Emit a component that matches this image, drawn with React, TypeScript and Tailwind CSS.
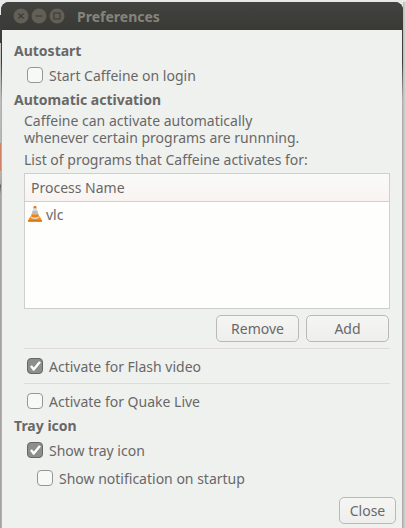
import React, { ReactNode, useState } from 'react';
import clsx from 'clsx';

type CheckOptionProps = {
  label: string;
  defaultChecked?: boolean;
  className?: string;
}

function CheckOption({ label, defaultChecked = false, className }: CheckOptionProps): ReactNode {
  const [checked, setChecked] = useState(defaultChecked);

  return (
    <label className={clsx('flex h-[22px] items-center gap-1.5', className)}>
      <span className="grid size-4 shrink-0">
        <input
          type="checkbox"
          checked={checked}
          onChange={(event) => setChecked(event.target.checked)}
          className="col-start-1 row-start-1 size-4 appearance-none rounded border border-[#969694] bg-[#f8f9f7] checked:border-[#666664] checked:bg-[#8e8e8d]"
        />
        {checked && (
          <svg viewBox="0 0 16 16" className="pointer-events-none col-start-1 row-start-1 size-4" aria-hidden="true">
            <path d="M3 8.4 4.9 7.2 6.8 9.4 12 3.3 14 4.6 7.2 12.8H6.1z" fill="#fff" />
          </svg>
        )}
      </span>
      <span>{label}</span>
    </label>
  );
}

type ButtonProps = {
  children: ReactNode;
  className?: string;
}

function Button({ children, className }: ButtonProps): ReactNode {
  return (
    <button
      type="button"
      className={clsx(
        'h-[27px] rounded-[5px] border border-[#b9b9b7] bg-linear-to-b from-[#f5f6f4] to-[#eeefed] text-center',
        className,
      )}
    >
      {children}
    </button>
  );
}

type WindowButtonProps = {
  label: string;
  path: string;
}

function WindowButton({ label, path }: WindowButtonProps): ReactNode {
  return (
    <button type="button" aria-label={label} className="size-4">
      <svg viewBox="0 0 16 16" className="size-4">
        <circle cx="8" cy="8" r="7.5" fill="#625f56" />
        <path d={path} fill="none" stroke="#3a3934" strokeWidth="1.1" />
      </svg>
    </button>
  );
}

function VlcIcon(): ReactNode {
  return (
    <svg viewBox="0 0 16 18" className="h-[18px] w-4 shrink-0" aria-hidden="true">
      <path d="M3.2 11.5h9.6l2.2 4.2H1z" fill="#f58b0a" />
      <path d="M1 15.2h14v1.6H1z" fill="#d06a00" />
      <path d="M7 1h2l3.4 11.8q-4.4 2.6-8.8 0z" fill="#dcdee0" />
      <path d="M7 1h2l.7 2.2H6.3z" fill="#e5791b" />
      <path d="M5.7 5.8h4.6l.9 3q-3.2 1.2-6.4 0z" fill="#b9bcc0" />
      <path d="M4.7 8.9q3.3 1.3 6.6 0l.7 2.6q-4 1.9-8 0z" fill="#ee8214" />
    </svg>
  );
}

function App(): ReactNode {
  return (
    <div className="flex min-h-screen bg-[#e6e9e7] pt-0.5 font-['Noto_Sans','Liberation_Sans',sans-serif] text-[14px] leading-[17px] text-[#696867]">
      {/* sliver of the desktop behind the window */}
      <div className="w-px shrink-0 bg-[linear-gradient(#e6e9e7_13px,#3c3c3a_13px,#3c3c3a_41px,#c4c4c4_41px,#b9b7b7_141px,#d08467_141px,#d08467_169px,#b9b7b7_169px,#aba6a6_182px,#5a5a5a_183px,#a8a3a3_192px)]" />

      <main className="flex grow flex-col overflow-hidden rounded-t-lg bg-[linear-gradient(#3c3d39_60px,#b3adab_98px)]">
        <header className="flex h-7 shrink-0 items-center gap-0.5 bg-linear-to-b from-[#42433f] to-[#393935] pl-3 text-[#85847c]">
          <WindowButton label="Close window" path="m5.5 5.5 5 5m0-5-5 5" />
          <WindowButton label="Minimize" path="M4.5 8h7" />
          <WindowButton label="Maximize" path="M5 5h6v6H5z" />
          <h1 className="pl-2.5 font-bold">Preferences</h1>
        </header>

        <div className="mx-px flex grow flex-col bg-[#eff1ef]">
          <div className="flex grow flex-col px-3 pt-3">
            <h2 className="font-bold">Autostart</h2>
            <CheckOption label="Start Caffeine on login" className="mt-[5px] ml-[13px]" />

            <h2 className="mt-[5px] font-bold">Automatic activation</h2>
            <div className="ml-2.5 flex flex-col">
              <p className="mt-1">
                Caffeine can activate automatically
                <br />
                whenever certain programs are runnning.
              </p>
              <p className="mt-[5px]">List of programs that Caffeine activates for:</p>

              <div className="mt-[5px] h-[136px] border border-[#cfd0ce] bg-[#fefefd]">
                <table className="w-full border-separate border-spacing-0">
                  <thead>
                    <tr>
                      <th className="h-7 border-b border-[#cfd0ce] bg-linear-to-b from-[#f9fbf9] to-[#f9f3f1] px-1.5 text-left font-normal">
                        Process Name
                      </th>
                    </tr>
                  </thead>
                  <tbody>
                    <tr>
                      <td className="h-6 px-0.5">
                        <span className="flex items-center gap-[3px]">
                          <VlcIcon />
                          vlc
                        </span>
                      </td>
                    </tr>
                  </tbody>
                </table>
              </div>

              <div className="mt-1.5 flex justify-end gap-[7px] pr-px">
                <Button className="w-[83px]">Remove</Button>
                <Button className="w-[83px]">Add</Button>
              </div>

              <hr className="mt-1.5 border-[#dfdad8]" />
              <CheckOption label="Activate for Flash video" defaultChecked className="my-1.5 ml-[3px]" />
              <hr className="border-[#dfdad8]" />
              <CheckOption label="Activate for Quake Live" className="mt-1.5 ml-[3px]" />
            </div>

            <h2 className="mt-[5px] font-bold">Tray icon</h2>
            <CheckOption label="Show tray icon" defaultChecked className="mt-[5px] ml-[13px]" />
            <CheckOption label="Show notification on startup" className="mt-1.5 ml-[23px]" />
          </div>

          <footer className="flex justify-end px-1.5 pb-1">
            <Button className="w-[57px]">Close</Button>
          </footer>
        </div>
      </main>

      <div className="w-[3px] shrink-0 bg-linear-to-r from-[#b9bbb9] to-[#d9dcda]" />
    </div>
  );
}

export default App;
